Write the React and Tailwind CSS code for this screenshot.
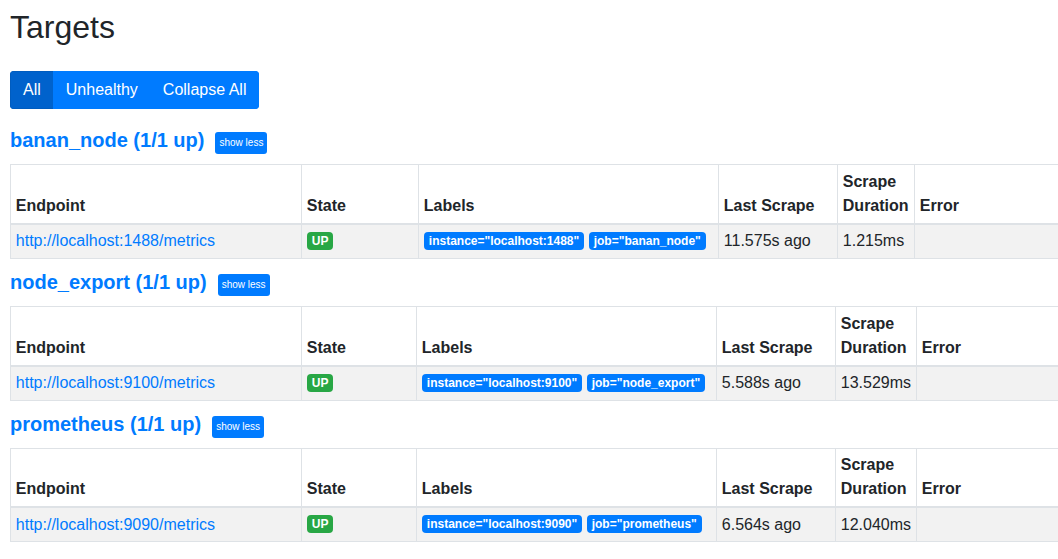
import React from "react";

const jobs = [
  {
    name: "banan_node",
    endpoint: "http://localhost:1488/metrics",
    instance: 'instance="localhost:1488"',
    job: 'job="banan_node"',
    last: "11.575s ago",
    dur: "1.215ms",
    widths: [291, 117, 300, 119, 77],
  },
  {
    name: "node_export",
    endpoint: "http://localhost:9100/metrics",
    instance: 'instance="localhost:9100"',
    job: 'job="node_export"',
    last: "5.588s ago",
    dur: "13.529ms",
    widths: [291, 115, 300, 119, 81],
  },
  {
    name: "prometheus",
    endpoint: "http://localhost:9090/metrics",
    instance: 'instance="localhost:9090"',
    job: 'job="prometheus"',
    last: "6.564s ago",
    dur: "12.040ms",
    widths: [291, 115, 300, 119, 81],
  },
];

const badge =
  "inline-block align-middle text-white text-[12px] font-bold leading-none px-[5px] py-[3px] rounded-[4px] relative top-[-1px]";

function Job({ j, first }) {
  const th = "border border-[#dee2e6] border-b-2 p-[4.8px] text-left align-bottom font-bold";
  const td = "border border-[#dee2e6] px-[4.8px] py-[4.5px] align-top";
  return (
    <div>
      <div className={"flex items-center mb-[12px] " + (first ? "mt-[12px]" : "mt-[11px]")}>
        <a className="text-[20px] font-bold leading-[1.2] text-[#007bff]">
          {j.name} (1/1 up)
        </a>
        <button className="ml-[11px] relative top-[3px] h-[22px] px-[4px] rounded-[3px] bg-[#007bff] text-white text-[10px] leading-none">
          show less
        </button>
      </div>
      <table className="border-collapse w-[1100px] text-[16px] leading-[24px] text-[#212529]">
        <thead>
          <tr>
            <th className={th} style={{ width: j.widths[0] }}>Endpoint</th>
            <th className={th} style={{ width: j.widths[1] }}>State</th>
            <th className={th} style={{ width: j.widths[2] }}>Labels</th>
            <th className={th} style={{ width: j.widths[3] }}>Last Scrape</th>
            <th className={th} style={{ width: j.widths[4] }}>Scrape Duration</th>
            <th className={th}>Error</th>
          </tr>
        </thead>
        <tbody>
          <tr className="bg-[#f2f2f2]">
            <td className={td}>
              <a className="text-[#007bff]">{j.endpoint}</a>
            </td>
            <td className={td}>
              <span className={badge + " bg-[#28a745]"}>UP</span>
            </td>
            <td className={td}>
              <span className={badge + " bg-[#007bff]"}>{j.instance}</span>{" "}
              <span className={badge + " bg-[#007bff]"}>{j.job}</span>
            </td>
            <td className={td}>{j.last}</td>
            <td className={td}>{j.dur}</td>
            <td className={td}></td>
          </tr>
        </tbody>
      </table>
    </div>
  );
}

export default function App() {
  return (
    <div
      className="w-[1058px] h-[559px] overflow-hidden bg-white px-[10px] text-[#212529]"
      style={{ fontFamily: '"Liberation Sans", Arial, sans-serif' }}
    >
      <h2 className="text-[32px] font-medium leading-[1.2] pt-[8px] mb-[25px]">Targets</h2>
      <div className="inline-flex rounded-[4px] overflow-hidden text-[16px] leading-[24px] text-white mb-[7px]">
        <button className="bg-[#0062cc] border border-[#005cbf] px-[12px] py-[6px]">All</button>
        <button className="bg-[#007bff] border border-[#007bff] -ml-px px-[12px] py-[6px]">Unhealthy</button>
        <button className="bg-[#007bff] border border-[#007bff] -ml-px px-[12px] py-[6px]">Collapse All</button>
      </div>
      {jobs.map((j, i) => (
        <Job key={j.name} j={j} first={i === 0} />
      ))}
    </div>
  );
}
